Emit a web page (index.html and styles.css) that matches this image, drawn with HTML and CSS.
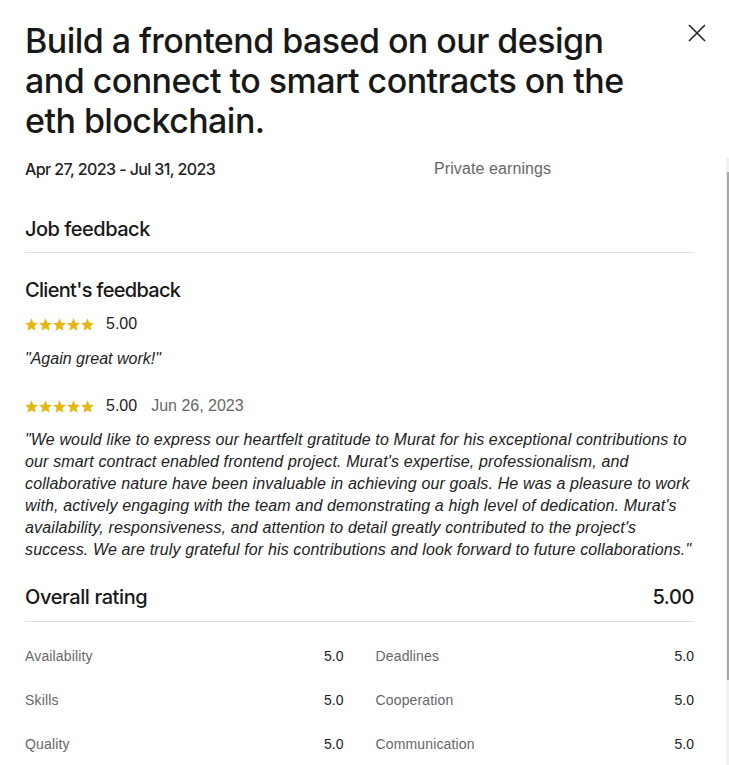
FILE: index.html
```html
<!DOCTYPE html>
<html lang="en">
<head>
<meta charset="utf-8">
<title>Job feedback</title>
<link rel="stylesheet" href="styles.css">
</head>
<body>
<div class="modal">
  <button class="close" aria-label="Close">
    <svg width="20" height="20" viewBox="0 0 20 20"><path d="M2 2 L18 18 M18 2 L2 18" stroke="#222" stroke-width="1.6" fill="none"/></svg>
  </button>
  <h1 class="title">Build a frontend based on our design and connect to smart contracts on the eth blockchain.</h1>
  <div class="meta">
    <div class="dates">Apr 27, 2023 - Jul 31, 2023</div>
    <div class="earnings">Private earnings</div>
  </div>
  <h2 class="section-title">Job feedback</h2>
  <h3 class="sub-title">Client's feedback</h3>
  <div class="rating-row">
    <span class="stars">
      <svg viewBox="2 1.5 20 20"><path d="M12 17.27 18.18 21l-1.64-7.03L22 9.240l-7.19-.61L12 2 9.19 8.63 2 9.24l5.46 4.73L5.82 21z"/></svg>
      <svg viewBox="2 1.5 20 20"><path d="M12 17.27 18.18 21l-1.64-7.03L22 9.24l-7.19-.61L12 2 9.19 8.63 2 9.24l5.46 4.73L5.82 21z"/></svg>
      <svg viewBox="2 1.5 20 20"><path d="M12 17.27 18.18 21l-1.64-7.03L22 9.24l-7.19-.61L12 2 9.19 8.63 2 9.24l5.46 4.73L5.82 21z"/></svg>
      <svg viewBox="2 1.5 20 20"><path d="M12 17.27 18.18 21l-1.64-7.03L22 9.24l-7.19-.61L12 2 9.19 8.63 2 9.24l5.46 4.73L5.82 21z"/></svg>
      <svg viewBox="2 1.5 20 20"><path d="M12 17.27 18.18 21l-1.64-7.03L22 9.24l-7.19-.61L12 2 9.19 8.63 2 9.24l5.46 4.73L5.82 21z"/></svg>
    </span>
    <span class="score">5.00</span>
  </div>
  <p class="quote short">"Again great work!"</p>
  <div class="rating-row second">
    <span class="stars">
      <svg viewBox="2 1.5 20 20"><path d="M12 17.27 18.18 21l-1.64-7.03L22 9.24l-7.19-.61L12 2 9.19 8.63 2 9.24l5.46 4.73L5.82 21z"/></svg>
      <svg viewBox="2 1.5 20 20"><path d="M12 17.27 18.18 21l-1.64-7.03L22 9.24l-7.19-.61L12 2 9.19 8.63 2 9.24l5.46 4.73L5.82 21z"/></svg>
      <svg viewBox="2 1.5 20 20"><path d="M12 17.27 18.18 21l-1.64-7.03L22 9.24l-7.19-.61L12 2 9.19 8.63 2 9.24l5.46 4.73L5.82 21z"/></svg>
      <svg viewBox="2 1.5 20 20"><path d="M12 17.27 18.18 21l-1.64-7.03L22 9.24l-7.19-.61L12 2 9.19 8.63 2 9.24l5.46 4.73L5.82 21z"/></svg>
      <svg viewBox="2 1.5 20 20"><path d="M12 17.27 18.18 21l-1.64-7.03L22 9.24l-7.19-.61L12 2 9.19 8.63 2 9.24l5.46 4.73L5.82 21z"/></svg>
    </span>
    <span class="score">5.00</span>
    <span class="date">Jun 26, 2023</span>
  </div>
  <p class="quote long">"We would like to express our heartfelt gratitude to Murat for his exceptional contributions to our smart contract enabled frontend project. Murat's expertise, professionalism, and collaborative nature have been invaluable in achieving our goals. He was a pleasure to work with, actively engaging with the team and demonstrating a high level of dedication. Murat's availability, responsiveness, and attention to detail greatly contributed to the project's success. We are truly grateful for his contributions and look forward to future collaborations."</p>
  <div class="overall">
    <span>Overall rating</span>
    <span>5.00</span>
  </div>
  <div class="grid">
    <div class="item"><span class="label">Availability</span><span class="val">5.0</span></div>
    <div class="item"><span class="label">Deadlines</span><span class="val">5.0</span></div>
    <div class="item"><span class="label">Skills</span><span class="val">5.0</span></div>
    <div class="item"><span class="label">Cooperation</span><span class="val">5.0</span></div>
    <div class="item"><span class="label">Quality</span><span class="val">5.0</span></div>
    <div class="item"><span class="label">Communication</span><span class="val">5.0</span></div>
  </div>
  <div class="scrollbar"><div class="thumb"></div></div>
</div>
</body>
</html>
```

FILE: styles.css
```css
* { box-sizing: border-box; }
html, body { margin: 0; padding: 0; background: #fff; }
body {
  font-family: "Liberation Sans", Arial, sans-serif;
  color: #181818;
  overflow: hidden;
}
.modal {
  position: relative;
  width: 729px;
  height: 765px;
  padding: 21px 35px 0 25px;
}
.close {
  position: absolute;
  top: 23px;
  left: 687px;
  width: 20px;
  height: 20px;
  padding: 0;
  border: 0;
  background: none;
}
.close svg { display: block; }
.title {
  margin: 0;
  width: 620px;
  font-family: Inter, "Liberation Sans", sans-serif;
  font-size: 34px;
  line-height: 40px;
  font-weight: 500;
  letter-spacing: -0.55px;
  color: #181818;
}
.meta {
  display: flex;
  margin-top: 17px;
  font-size: 16px;
  line-height: 22px;
}
.dates {
  width: 409px;
  font-family: Inter, "Liberation Sans", sans-serif;
  font-weight: 500;
  color: #222;
  letter-spacing: -0.6px;
}
.earnings { color: #676767; letter-spacing: 0.1px; }
.section-title {
  margin: 37px 0 0;
  padding-bottom: 11px;
  border-bottom: 1px solid #e0e0e0;
  font-family: Inter, "Liberation Sans", sans-serif;
  font-size: 20px;
  line-height: 24px;
  font-weight: 500;
  letter-spacing: -0.5px;
}
.sub-title {
  margin: 24px 0 0;
  font-family: Inter, "Liberation Sans", sans-serif;
  font-size: 20px;
  line-height: 26px;
  font-weight: 500;
  letter-spacing: -0.7px;
}
.rating-row {
  display: flex;
  align-items: center;
  margin-top: 11px;
  height: 20px;
  font-size: 16px;
}
.rating-row.second { margin-top: 26px; }
.stars { display: flex; gap: 1px; width: 81px; }
.stars svg { width: 13px; height: 13px; fill: #e4b713; }
.score { color: #222; }
.date { margin-left: 14px; color: #676767; }
.quote {
  margin: 0;
  font-style: italic;
  font-size: 16px;
  line-height: 22px;
  color: #222;
}
.quote.short { margin-top: 14px; }
.quote.long { margin-top: 13px; letter-spacing: 0.14px; }
.overall {
  display: flex;
  justify-content: space-between;
  margin-top: 24px;
  padding-bottom: 12px;
  border-bottom: 1px solid #e0e0e0;
  font-family: Inter, "Liberation Sans", sans-serif;
  font-size: 20px;
  line-height: 24px;
  font-weight: 500;
  letter-spacing: -0.4px;
}
.grid {
  display: grid;
  grid-template-columns: 1fr 1fr;
  column-gap: 32px;
  row-gap: 24px;
  margin-top: 24px;
}
.item {
  display: flex;
  justify-content: space-between;
  font-size: 14px;
  line-height: 20px;
}
.label { color: #676767; letter-spacing: 0.15px; }
.val { color: #222; }
.scrollbar {
  position: absolute;
  top: 158px;
  right: 0;
  width: 3px;
  height: 607px;
  background: #f1f1f1;
}
.thumb {
  margin-top: 14px;
  margin-left: 1px;
  width: 2px;
  height: 508px;
  background: #a8a8a8;
}
```
